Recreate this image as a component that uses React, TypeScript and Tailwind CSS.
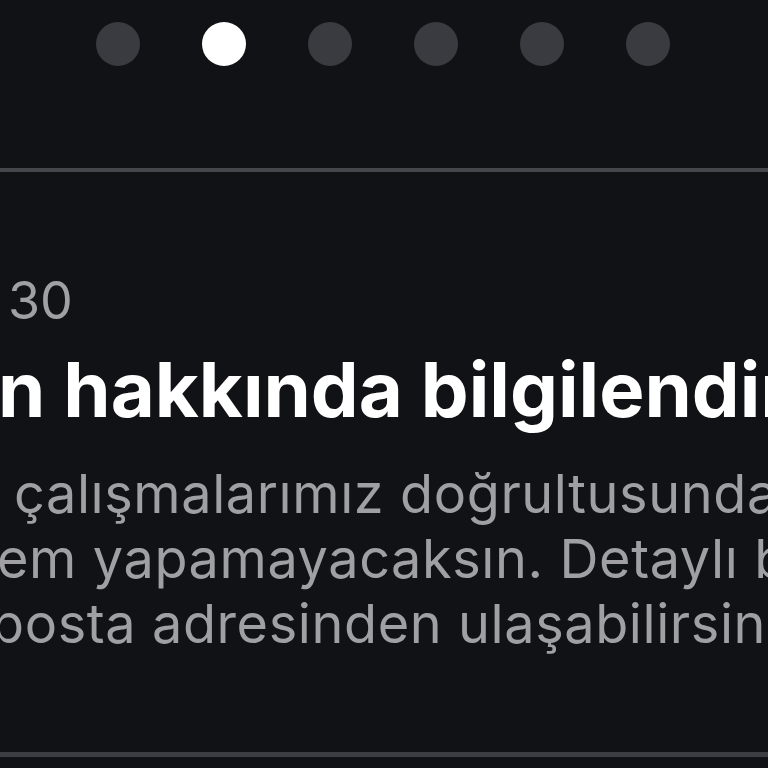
const dots = [false, true, false, false, false, false];

export default function App() {
  return (
    <div className="w-[768px] h-[768px] overflow-hidden bg-[#111216] font-['Inter',sans-serif]">
      {/* pager dots */}
      <div className="pt-[22px] pl-[96px] flex gap-[62px]">
        {dots.map((active, i) => (
          <div
            key={i}
            className={`w-11 h-11 rounded-full ${active ? 'bg-white' : 'bg-[#3a3b40]'}`}
          />
        ))}
      </div>

      <div className="mt-[102px] h-[4px] bg-[#45464b]" />

      {/* notification item */}
      <div className="mt-[103px] whitespace-nowrap">
        <div className="pl-[8px] text-[52px] leading-[52px] text-[#a0a0a4]">30</div>
        <div className="mt-[24px] -ml-[2px] text-[76px] leading-[76px] font-bold text-white">
          n hakkında bilgilendirme
        </div>
        <div className="mt-[34px] text-[54px] leading-[65px] tracking-[0.6px] text-[#a0a0a4]">
          <div className="pl-[14px]">çalışmalarımız doğrultusunda</div>
          <div className="-ml-[3px]">em yapamayacaksın. Detaylı bilgi için</div>
          <div className="-ml-[9px]">posta adresinden ulaşabilirsin.</div>
        </div>
      </div>

      <div className="mt-[96px] h-[5px] bg-[#3d3e43]" />
    </div>
  );
}
